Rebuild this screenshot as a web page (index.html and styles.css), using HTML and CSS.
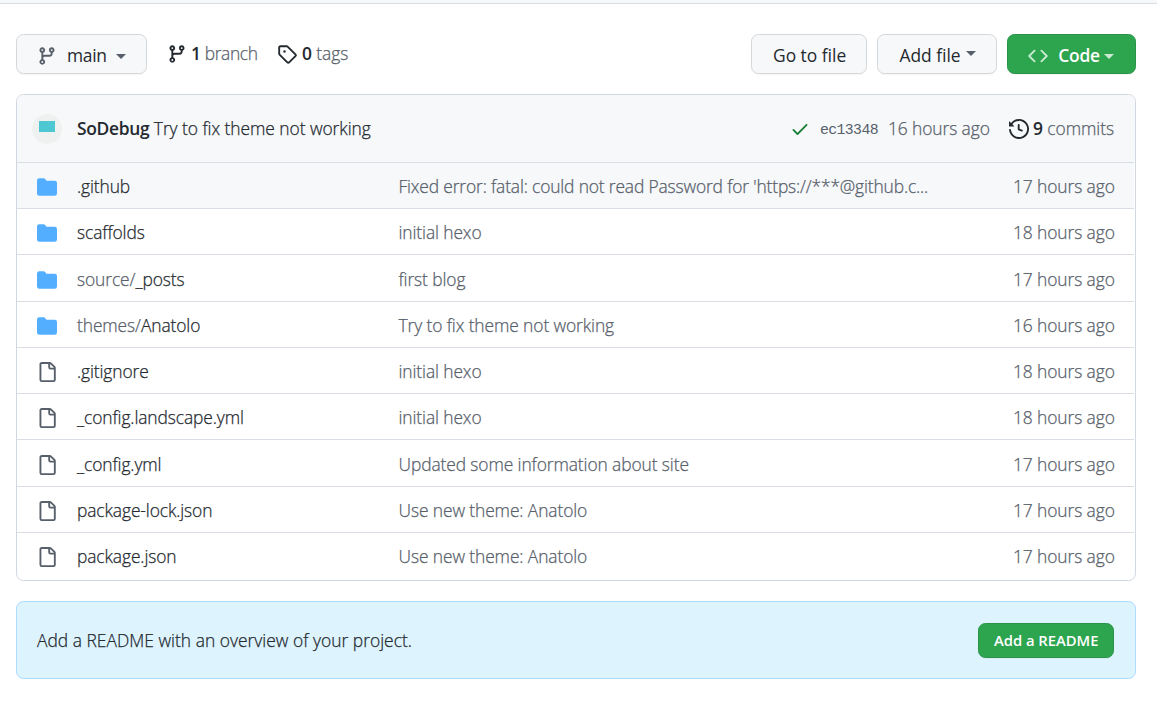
FILE: index.html
```html
<!DOCTYPE html>
<html lang="en">
<head>
<meta charset="utf-8">
<title>Repository files</title>
<link rel="stylesheet" href="styles.css">
</head>
<body>
<svg class="sprite" aria-hidden="true">
  <symbol id="branch" viewBox="0 0 16 16"><path fill-rule="evenodd" d="M11.75 2.5a.75.75 0 100 1.5.75.75 0 000-1.5zm-2.25.75a2.25 2.25 0 113 2.122V6A2.5 2.5 0 0110 8.5H6a1 1 0 00-1 1v1.128a2.251 2.251 0 11-1.5 0V5.372a2.25 2.25 0 111.5 0v1.836A2.492 2.492 0 016 7h4a1 1 0 001-1v-.628A2.25 2.25 0 019.5 3.25zM4.25 12a.75.75 0 100 1.5.75.75 0 000-1.5zM3.5 3.25a.75.75 0 111.5 0 .75.75 0 01-1.5 0z"/></symbol>
  <symbol id="tag" viewBox="0 0 16 16"><path fill-rule="evenodd" d="M2.5 7.775V2.75a.25.25 0 01.25-.25h5.025a.25.25 0 01.177.073l6.25 6.25a.25.25 0 010 .354l-5.025 5.025a.25.25 0 01-.354 0l-6.25-6.25a.25.25 0 01-.073-.177zm-1.5 0V2.75C1 1.784 1.784 1 2.75 1h5.025c.464 0 .91.184 1.238.513l6.25 6.25a1.75 1.75 0 010 2.474l-5.026 5.026a1.75 1.75 0 01-2.474 0l-6.25-6.25A1.75 1.75 0 011 7.775zM6 5a1 1 0 100 2 1 1 0 000-2z"/></symbol>
  <symbol id="history" viewBox="0 0 16 16"><path fill-rule="evenodd" d="M1.643 3.143L.427 1.927A.25.25 0 000 2.104V5.75c0 .138.112.25.25.25h3.646a.25.25 0 00.177-.427L2.715 4.215a6.5 6.5 0 11-1.18 4.458.75.75 0 10-1.493.154 8.001 8.001 0 101.6-5.684zM7.75 4a.75.75 0 01.75.75v2.992l2.028.812a.75.75 0 01-.557 1.392l-2.5-1A.75.75 0 017 8.25v-3.5A.75.75 0 017.75 4z"/></symbol>
  <symbol id="file" viewBox="0 0 16 16"><path fill-rule="evenodd" d="M2 1.75C2 .784 2.784 0 3.75 0h6.586c.464 0 .909.184 1.237.513l2.914 2.914c.329.328.513.773.513 1.237v9.586A1.75 1.75 0 0113.25 16h-9.5A1.75 1.75 0 012 14.25V1.75zm1.75-.25a.25.25 0 00-.25.25v12.5c0 .138.112.25.25.25h9.5a.25.25 0 00.25-.25V6h-2.75A1.75 1.75 0 019 4.25V1.5H3.75zm6.75.062V4.25c0 .138.112.25.25.25h2.688a.252.252 0 00-.011-.013l-2.914-2.914a.272.272 0 00-.013-.011z"/></symbol>
  <symbol id="folder" viewBox="0 0 16 16"><path d="M1.75 1A1.75 1.75 0 000 2.75v10.5C0 14.216.784 15 1.75 15h12.5A1.75 1.75 0 0016 13.25v-8.5A1.75 1.75 0 0014.25 3h-6.5a.25.25 0 01-.2-.1l-.9-1.2c-.33-.44-.85-.7-1.4-.7h-3.5z"/></symbol>
  <symbol id="check" viewBox="0 0 16 16"><path d="M13.78 4.22a.75.75 0 010 1.06l-7.25 7.25a.75.75 0 01-1.06 0L2.22 9.28a.75.75 0 011.06-1.06L6 10.94l6.72-6.72a.75.75 0 011.06 0z"/></symbol>
  <symbol id="code" viewBox="0 0 16 16"><path d="M4.72 3.22a.75.75 0 011.06 1.06L2.06 8l3.72 3.72a.75.75 0 11-1.06 1.06L.47 8.53a.75.75 0 010-1.06l4.25-4.25zm6.56 0a.75.75 0 10-1.06 1.06L13.94 8l-3.72 3.72a.75.75 0 101.06 1.06l4.25-4.25a.75.75 0 000-1.06l-4.25-4.25z"/></symbol>
</svg>
<div class="topbar"></div>
<main class="page">
  <div class="toolbar">
    <button class="btn btn-main"><svg class="icon"><use href="#branch"/></svg><span class="main-label">main</span><i class="caret"></i></button>
    <a class="stat stat-branch"><svg class="icon"><use href="#branch"/></svg><span><b>1</b> branch</span></a>
    <a class="stat stat-tags"><svg class="icon"><use href="#tag"/></svg><span><b>0</b> tags</span></a>
    <div class="actions">
      <button class="btn btn-goto"><span>Go to file</span></button>
      <button class="btn btn-add"><span class="add-label">Add file</span><i class="caret caret-high"></i></button>
      <button class="btn btn-green btn-code"><svg class="icon"><use href="#code"/></svg><span class="code-label">Code</span><i class="caret"></i></button>
    </div>
  </div>

  <section class="box">
    <header class="commit">
      <span class="avatar"><i class="avatar-block"></i></span>
      <span class="commit-msg"><b>SoDebug</b> Try to fix theme not working</span>
      <svg class="icon commit-check"><use href="#check"/></svg>
      <span class="sha">ec13348</span>
      <span class="commit-time">16 hours ago</span>
      <svg class="icon commit-history"><use href="#history"/></svg>
      <span class="commits"><b>9</b> commits</span>
    </header>
    <div class="row row-active"><svg class="icon folder"><use href="#folder"/></svg><span class="name">.github</span><span class="msg msg-long">Fixed error: fatal: could not read Password for 'https://***@github.c...</span><span class="age">17 hours ago</span></div>
    <div class="row"><svg class="icon folder"><use href="#folder"/></svg><span class="name">scaffolds</span><span class="msg">initial hexo</span><span class="age">18 hours ago</span></div>
    <div class="row row-tall"><svg class="icon folder"><use href="#folder"/></svg><span class="name"><span class="dim">source/</span>_posts</span><span class="msg">first blog</span><span class="age">17 hours ago</span></div>
    <div class="row"><svg class="icon folder"><use href="#folder"/></svg><span class="name"><span class="dim">themes/</span>Anatolo</span><span class="msg">Try to fix theme not working</span><span class="age">16 hours ago</span></div>
    <div class="row"><svg class="icon"><use href="#file"/></svg><span class="name">.gitignore</span><span class="msg">initial hexo</span><span class="age">18 hours ago</span></div>
    <div class="row"><svg class="icon"><use href="#file"/></svg><span class="name">_config.landscape.yml</span><span class="msg">initial hexo</span><span class="age">18 hours ago</span></div>
    <div class="row row-tall"><svg class="icon"><use href="#file"/></svg><span class="name">_config.yml</span><span class="msg">Updated some information about site</span><span class="age">17 hours ago</span></div>
    <div class="row"><svg class="icon"><use href="#file"/></svg><span class="name">package-lock.json</span><span class="msg">Use new theme: Anatolo</span><span class="age">17 hours ago</span></div>
    <div class="row"><svg class="icon"><use href="#file"/></svg><span class="name">package.json</span><span class="msg">Use new theme: Anatolo</span><span class="age">17 hours ago</span></div>
  </section>

  <section class="readme">
    <span class="readme-text">Add a README with an overview of your project.</span>
    <button class="btn btn-green btn-readme"><span>Add a README</span></button>
  </section>
</main>
</body>
</html>
```

FILE: styles.css
```css
* { box-sizing: border-box; }
body {
  margin: 0;
  background: #fff;
  color: #24292f;
  font: 300 17.4px/26px "Open Sans", "Noto Sans", sans-serif;
  letter-spacing: -0.1px;
  -webkit-text-stroke: 0.25px;
  white-space: nowrap;
  overflow: hidden;
}
b { font-weight: 600; letter-spacing: -0.3px; -webkit-text-stroke: 0; }
.sprite { position: absolute; width: 0; height: 0; }
.icon { width: 20px; height: 20px; flex: none; fill: #57606a; -webkit-text-stroke: 0; stroke: none; }
.topbar { height: 4px; background: #f6f8fa; border-bottom: 1px solid #d8dee4; }
.page { padding: 30px 21px 0 16px; }

.toolbar { display: flex; height: 40px; margin-bottom: 20px; }
.btn {
  display: flex;
  align-items: center;
  height: 40px;
  padding: 3px 0 0;
  border: 1px solid #d5d8da;
  border-radius: 7.5px;
  background: #f6f8fa;
  box-shadow: 0 1px 0 rgba(27, 31, 36, .04);
  color: #24292f;
  font: inherit;
  font-weight: 500;
  letter-spacing: -0.3px;
  -webkit-text-stroke: 0;
}
.btn span, .stat span { margin-top: -2px; }
.caret { width: 0; height: 0; margin-top: 2px; border: 5px solid transparent; border-top-color: #57606a; border-bottom: 0; }
.caret-high { margin-top: -4px; }
.btn-main { width: 131px; padding-left: 20px; }
.btn .main-label { width: 39px; margin: -2px 10px 0; }
.stat { display: flex; align-items: center; height: 39px; color: #57606a; }
.stat .icon { fill: #24292f; }
.stat b, .commits b { color: #24292f; }
.stat-branch { margin-left: 20px; width: 90px; gap: 4px; letter-spacing: -0.4px; }
.stat-tags { margin-left: 20px; gap: 5px; letter-spacing: 0; }
.actions { display: flex; gap: 10px; margin-left: auto; }
.btn-goto { width: 116px; padding-left: 21px; letter-spacing: 0; }
.btn-add { width: 120px; padding-left: 20px; }
.add-label { width: 64px; margin-right: 4px; letter-spacing: 0; }
.btn-green { background: #2da44e; border-color: #2a9348; color: #fff; font-weight: 600; }
.btn-green .icon { fill: #c8ebd1; }
.btn-code { width: 129px; padding-left: 20px; }
.btn-code .caret { border-top-color: #c8ebd1; }
.btn .code-label { width: 42px; margin: -2px 4px 0 10px; }

.box { height: 487px; border: 1px solid #d0d7de; border-radius: 7.5px; overflow: hidden; }
.commit { display: flex; align-items: center; height: 67px; padding: 0 20px 0 15px; background: #f6f8fa; }
.avatar { width: 30px; height: 30px; border-radius: 50%; background: #eff0f0; margin-right: 15px; display: flex; justify-content: center; }
.avatar-block { width: 16px; height: 11px; margin-top: 7px; background: #4dc8d2; }
.commit-msg { margin: -2px auto 0 0; letter-spacing: -0.05px; }
.commit-check { fill: #1a7f37; margin-right: 10px; }
.sha { width: 57px; margin-right: 11px; font: 14.8px/26px "Liberation Mono", monospace; letter-spacing: -.6px; color: #57606a; padding-top: 2px; -webkit-text-stroke: 0; }
.commit-time { width: 101px; margin: -2px 20px 0 0; color: #57606a; }
.commit-history { fill: #24292f; margin-right: 4px; }
.commits { width: 82px; margin-top: -2px; color: #57606a; letter-spacing: 0; }
.row {
  display: grid;
  grid-template-columns: 40px 321.5px 1fr 101px;
  align-items: center;
  height: 46px;
  margin-right: 1px;
  padding: 3px 20px 0 20px;
  border-top: 1px solid #d8dee4;
}
.row > span { margin-top: -2px; }
.row-tall { height: 47px; padding-top: 4px; }
.row-active { background: #f6f8fa; }
.row .folder { fill: #54aeff; }
.dim, .msg, .age { color: #57606a; }
.msg-long { letter-spacing: -0.15px; }

.readme {
  display: flex;
  align-items: center;
  justify-content: space-between;
  height: 78px;
  margin-top: 20px;
  padding: 0 21px 0 20px;
  background: #ddf4ff;
  border: 1px solid #addcff;
  border-radius: 7.5px;
}
.readme-text { margin-top: -1px; letter-spacing: 0.02px; }
.btn-readme { width: 136px; height: 35px; padding: 2px 0 0 15px; font-size: 14.8px; letter-spacing: -0.02px; }
```
